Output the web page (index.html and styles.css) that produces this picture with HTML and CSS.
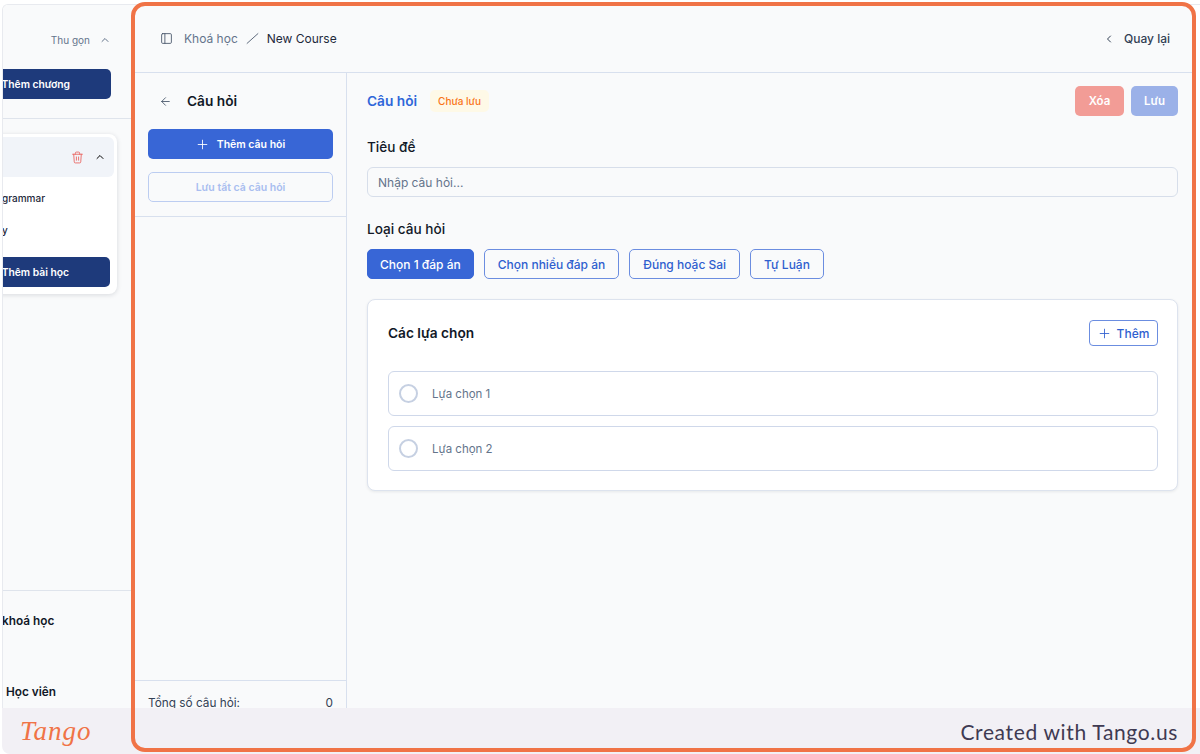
FILE: index.html
```html
<!DOCTYPE html>
<html lang="vi">
<head>
    <meta charset="UTF-8">
    <meta name="viewport" content="width=device-width, initial-scale=1.0">
    <title>New Course</title>
    <link rel="stylesheet" href="styles.css">
</head>
<body>
    <div class="app">
        <aside class="sidebar">
            <div class="chapter-bar">
                <div class="collapse-row">
                    <span>Thu gọn</span>
                    <svg class="icon-sm" viewBox="0 0 24 24"><path d="M6 15l6-6 6 6"/></svg>
                </div>
                <button class="dark-button chapter-add">Thêm chương</button>
            </div>
            <div class="chapter-card">
                <div class="chapter-head">
                    <svg class="icon-trash" viewBox="0 0 24 24"><path d="M3 6h18M8 6V4a2 2 0 0 1 2-2h4a2 2 0 0 1 2 2v2M19 6l-1 14a2 2 0 0 1-2 2H8a2 2 0 0 1-2-2L5 6M10 11v6M14 11v6"/></svg>
                    <svg class="icon-sm" viewBox="0 0 24 24"><path d="M6 15l6-6 6 6"/></svg>
                </div>
                <div class="lesson">grammar</div>
                <div class="lesson lesson-cut">y</div>
                <button class="dark-button lesson-add">Thêm bài học</button>
            </div>
            <div class="sidebar-bottom">
                <div class="side-link">khoá học</div>
                <div class="side-link side-link-second">Học viên</div>
            </div>
        </aside>

        <main class="main">
            <header class="topbar">
                <div class="crumbs">
                    <svg class="icon-md" viewBox="0 0 24 24"><rect x="3" y="3" width="18" height="18" rx="2"/><path d="M9 3v18"/></svg>
                    <span class="crumb-muted">Khoá học</span>
                    <svg class="icon-md" viewBox="0 0 24 24"><path d="M22 3L2 21"/></svg>
                    <span class="crumb-current">New Course</span>
                </div>
                <div class="back-link">
                    <svg class="icon-sm" viewBox="0 0 24 24"><path d="M15 18l-6-6 6-6"/></svg>
                    <span>Quay lại</span>
                </div>
            </header>

            <div class="workspace">
                <section class="questions">
                    <div class="questions-top">
                        <div class="questions-head">
                            <svg class="icon-md" viewBox="0 0 24 24"><path d="M19 12H5M12 19l-7-7 7-7"/></svg>
                            <h2>Câu hỏi</h2>
                        </div>
                        <button class="add-question">
                            <svg class="icon-md" viewBox="0 0 24 24"><path d="M12 4v16M4 12h16"/></svg>
                            Thêm câu hỏi
                        </button>
                        <button class="save-all">Lưu tất cả câu hỏi</button>
                    </div>
                    <div class="questions-list"></div>
                    <div class="questions-total">
                        <span>Tổng số câu hỏi:</span>
                        <span>0</span>
                    </div>
                </section>

                <section class="editor">
                    <div class="editor-head">
                        <h2>Câu hỏi</h2>
                        <span class="badge">Chưa lưu</span>
                        <div class="editor-actions">
                            <button class="btn-delete">Xóa</button>
                            <button class="btn-save">Lưu</button>
                        </div>
                    </div>

                    <label class="field-label" for="title">Tiêu đề</label>
                    <input class="title-input" id="title" type="text" placeholder="Nhập câu hỏi...">

                    <div class="field-label field-label-type">Loại câu hỏi</div>
                    <div class="type-list">
                        <button class="type-btn type-active">Chọn 1 đáp án</button>
                        <button class="type-btn">Chọn nhiều đáp án</button>
                        <button class="type-btn">Đúng hoặc Sai</button>
                        <button class="type-btn">Tự Luận</button>
                    </div>

                    <div class="choices-card">
                        <div class="choices-head">
                            <h3>Các lựa chọn</h3>
                            <button class="add-choice">
                                <svg class="icon-md" viewBox="0 0 24 24"><path d="M12 4v16M4 12h16"/></svg>
                                Thêm
                            </button>
                        </div>
                        <div class="choice"><span class="radio"></span>Lựa chọn 1</div>
                        <div class="choice"><span class="radio"></span>Lựa chọn 2</div>
                    </div>
                </section>
            </div>
        </main>
    </div>

    <footer class="tango-bar">
        <span class="tango-logo">Tango</span>
        <span class="tango-note">Created with Tango.us</span>
    </footer>

    <div class="highlight"></div>
</body>
</html>
```

FILE: styles.css
```css
* {
    margin: 0;
    padding: 0;
    box-sizing: border-box;
    font-family: 'Inter', 'Noto Sans', sans-serif;
}

body {
    position: relative;
    width: 1200px;
    height: 754px;
    overflow: hidden;
    background: #fff;
}

button {
    border: none;
    cursor: pointer;
}

svg {
    fill: none;
    stroke: currentColor;
    stroke-width: 2;
    stroke-linecap: round;
    stroke-linejoin: round;
    flex-shrink: 0;
}

.icon-sm {
    width: 12px;
    height: 12px;
}

.icon-md {
    width: 13px;
    height: 13px;
    stroke-width: 1.6;
}

.app {
    display: flex;
    height: 704px;
    margin: 4px 0 0 2px;
    border-top: 1px solid #e8eaef;
    border-left: 1px solid #e8eaef;
    border-top-left-radius: 6px;
    overflow: hidden;
}

/* Sidebar, cut off on the left by the screenshot */
.sidebar {
    width: 128px;
    flex-shrink: 0;
    display: flex;
    flex-direction: column;
    overflow: hidden;
    background: #f9fafb;
}

.chapter-bar {
    height: 114px;
    flex-shrink: 0;
    padding-top: 25px;
    border-bottom: 1px solid #dfe4ec;
}

.collapse-row {
    display: flex;
    justify-content: flex-end;
    align-items: center;
    gap: 9px;
    height: 20px;
    padding-right: 20px;
    font-size: 10px;
    color: #64748b;
}

.dark-button {
    display: flex;
    align-items: center;
    justify-content: flex-end;
    height: 30px;
    background: #1e3a7b;
    color: #fff;
    font-size: 10.3px;
    font-weight: 600;
    border-radius: 5px;
}

.chapter-add {
    width: 128px;
    margin: 19px 0 0 -20px;
    padding-right: 41px;
}

.chapter-card {
    width: 134px;
    margin: 15px 0 0 -20px;
    padding: 3px 3px 7px;
    background: #fff;
    border-radius: 8px;
    box-shadow: 0 1px 5px rgba(15, 23, 42, 0.14);
}

.chapter-head {
    display: flex;
    justify-content: flex-end;
    align-items: center;
    gap: 10px;
    height: 40px;
    margin-bottom: 5px;
    padding-right: 8px;
    background: #f1f4f9;
    border-radius: 6px;
}

.icon-trash {
    width: 13px;
    height: 15px;
    color: #ea6a66;
    stroke-width: 1.7;
}

.lesson {
    height: 32px;
    padding-left: 16px;
    line-height: 32px;
    font-size: 10px;
    font-weight: 500;
    color: #1e293b;
}

.lesson-add {
    width: 124px;
    margin-top: 11px;
    padding-right: 41px;
}

.sidebar-bottom {
    margin-top: auto;
    height: 118px;
    flex-shrink: 0;
    padding-top: 20px;
    border-top: 1px solid #dfe4ec;
}

.side-link {
    height: 20px;
    line-height: 20px;
    font-size: 11.8px;
    font-weight: 600;
    color: #111827;
    margin-left: -1px;
}

.side-link-second {
    margin: 51px 0 0 3px;
}

/* Main area */
.main {
    width: 1061px;
    flex-shrink: 0;
    display: flex;
    flex-direction: column;
    background: #f9fafb;
}

.topbar {
    height: 68px;
    flex-shrink: 0;
    display: flex;
    justify-content: space-between;
    align-items: center;
    padding: 0 22px 0 29px;
    border-bottom: 1px solid #d8e0ee;
}

.crumbs {
    display: flex;
    align-items: center;
    gap: 8px;
    font-size: 12px;
}

.crumbs .icon-md {
    color: #475569;
}

.crumbs > .icon-md:first-child {
    margin-right: 3px;
}

.crumb-muted {
    color: #64748b;
}

.crumb-current {
    color: #1e293b;
}

.back-link {
    display: flex;
    align-items: center;
    gap: 9px;
    font-size: 12px;
    font-weight: 500;
    color: #334155;
}

.workspace {
    flex: 1;
    display: flex;
    min-height: 0;
}

.questions {
    width: 216px;
    flex-shrink: 0;
    display: flex;
    flex-direction: column;
    border-right: 1px solid #d8e0ee;
}

.questions-top {
    padding: 16px 13px 14px 17px;
    border-bottom: 1px solid #d8e0ee;
}

.questions-head {
    display: flex;
    align-items: center;
    gap: 15px;
    height: 24px;
    margin-bottom: 16px;
    padding-left: 11px;
    color: #475569;
}

.questions-head h2 {
    font-size: 13.7px;
    font-weight: 600;
    color: #111827;
}

.add-question,
.save-all {
    display: flex;
    align-items: center;
    justify-content: center;
    gap: 8px;
    width: 185px;
    height: 30px;
    font-size: 10.5px;
    font-weight: 600;
    border-radius: 5px;
}

.add-question {
    background: #3866d6;
    color: #fff;
    margin-bottom: 13px;
}

.save-all {
    background: transparent;
    border: 1px solid #bccdf1;
    color: #a9bef0;
}

.questions-list {
    flex: 1;
}

.questions-total {
    flex-shrink: 0;
    display: flex;
    justify-content: space-between;
    height: 28px;
    padding: 14px 13px 0 17px;
    border-top: 1px solid #d8e0ee;
    font-size: 11.8px;
    line-height: 16px;
    color: #334155;
    overflow: hidden;
}

.editor {
    flex: 1;
    padding: 13px 14px 0 20px;
}

.editor-head {
    display: flex;
    align-items: center;
    height: 30px;
}

.editor-head h2 {
    font-size: 13.7px;
    font-weight: 600;
    color: #2f66d9;
}

.badge {
    margin-left: 13px;
    padding: 0 8px;
    height: 22px;
    line-height: 22px;
    background: #fef9e7;
    color: #f97316;
    font-size: 10px;
    font-weight: 500;
    border-radius: 5px;
}

.editor-actions {
    display: flex;
    gap: 7px;
    margin-left: auto;
}

.btn-delete,
.btn-save {
    height: 30px;
    color: #fff;
    font-size: 11.5px;
    font-weight: 600;
    border-radius: 5px;
}

.btn-delete {
    width: 49px;
    background: #f29c96;
}

.btn-save {
    width: 47px;
    background: #9bb1e8;
}

.field-label {
    display: block;
    height: 20px;
    line-height: 20px;
    margin-top: 21px;
    font-size: 13.6px;
    font-weight: 500;
    color: #111827;
}

.field-label-type {
    margin-top: 22px;
}

.title-input {
    display: block;
    width: 100%;
    height: 30px;
    margin-top: 10px;
    padding: 0 10px;
    background: #f9fafb;
    border: 1px solid #d7deea;
    border-radius: 6px;
    font-size: 12px;
    outline: none;
}

.title-input::placeholder {
    color: #64748b;
    opacity: 1;
}

.type-list {
    display: flex;
    gap: 10px;
    margin-top: 10px;
}

.type-btn {
    height: 30px;
    padding: 0 13px;
    background: transparent;
    border: 1px solid #6b8de0;
    border-radius: 5px;
    color: #2f5fcf;
    font-size: 12px;
    font-weight: 500;
}

.type-active {
    padding: 0 12px;
    background: #3866d6;
    border-color: #3866d6;
    color: #fff;
}

.choices-card {
    margin-top: 20px;
    padding: 20px 19px 19px 20px;
    background: #fff;
    border: 1px solid #dde3ee;
    border-radius: 8px;
    box-shadow: 0 1px 3px rgba(15, 23, 42, 0.08);
}

.choices-head {
    display: flex;
    justify-content: space-between;
    align-items: center;
    margin-bottom: 25px;
}

.choices-head h3 {
    font-size: 13.7px;
    font-weight: 600;
    color: #111827;
}

.add-choice {
    display: flex;
    align-items: center;
    justify-content: center;
    gap: 6px;
    width: 69px;
    height: 26px;
    background: transparent;
    border: 1px solid #6b8de0;
    border-radius: 4px;
    color: #2f5fcf;
    font-size: 12px;
    font-weight: 500;
}

.choice {
    display: flex;
    align-items: center;
    gap: 14px;
    height: 45px;
    padding-left: 10px;
    border: 1px solid #cfd8ea;
    border-radius: 6px;
    font-size: 11.5px;
    color: #64748b;
}

.choice + .choice {
    margin-top: 10px;
}

.radio {
    width: 19px;
    height: 19px;
    border: 2px solid #c6d0e2;
    border-radius: 50%;
}

/* Tango bar and frame laid over the capture */
.tango-bar {
    display: flex;
    justify-content: space-between;
    align-items: center;
    height: 46px;
    padding: 0 22px 0 18px;
    margin-left: 2px;
    background: #f2f0f5;
    border-bottom-left-radius: 8px;
}

.tango-logo {
    font-family: 'Liberation Serif', serif;
    font-style: italic;
    font-size: 27px;
    color: #f07346;
    letter-spacing: 1px;
}

.tango-note {
    font-family: 'Lato', sans-serif;
    font-size: 21px;
    letter-spacing: 0.65px;
    color: #3f3a52;
}

.highlight {
    position: absolute;
    left: 131px;
    top: 2px;
    width: 1065px;
    height: 750px;
    border: 4px solid #f07346;
    border-radius: 14px;
    pointer-events: none;
}
```
